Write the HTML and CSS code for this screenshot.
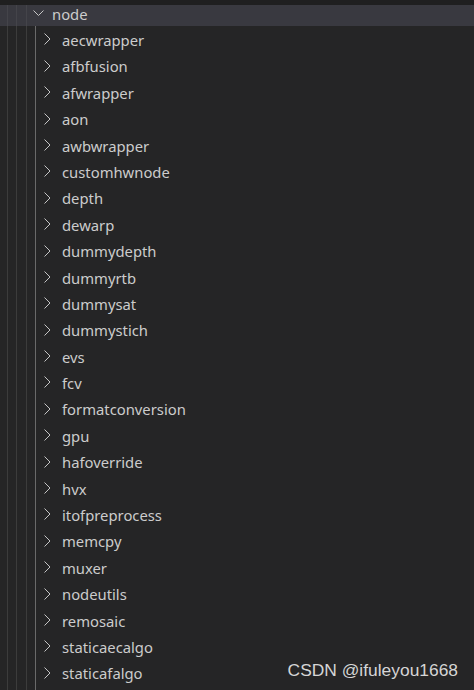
FILE: index.html
```html
<!DOCTYPE html>
<html>
<head>
<meta charset="utf-8">
<link rel="stylesheet" href="styles.css">
</head>
<body>
<div class="tree">
  <div class="shadow"></div>
  <div class="row row-open">
    <svg class="chev-down" width="11" height="7" viewBox="0 0 11 7"><polyline points="0.5,0.5 5.5,5.5 10.5,0.5" fill="none" stroke="#c5c5c5" stroke-width="1"/></svg>
    <span class="label">node</span>
  </div>
  <div class="children">
    <div class="row child"><svg class="chev" width="7" height="12" viewBox="0 0 7 12"><polyline points="0.5,0.5 6,6 0.5,11.5" fill="none" stroke="#c5c5c5" stroke-width="1"/></svg><span class="label">aecwrapper</span></div>
    <div class="row child"><svg class="chev" width="7" height="12" viewBox="0 0 7 12"><polyline points="0.5,0.5 6,6 0.5,11.5" fill="none" stroke="#c5c5c5" stroke-width="1"/></svg><span class="label">afbfusion</span></div>
    <div class="row child"><svg class="chev" width="7" height="12" viewBox="0 0 7 12"><polyline points="0.5,0.5 6,6 0.5,11.5" fill="none" stroke="#c5c5c5" stroke-width="1"/></svg><span class="label">afwrapper</span></div>
    <div class="row child"><svg class="chev" width="7" height="12" viewBox="0 0 7 12"><polyline points="0.5,0.5 6,6 0.5,11.5" fill="none" stroke="#c5c5c5" stroke-width="1"/></svg><span class="label">aon</span></div>
    <div class="row child"><svg class="chev" width="7" height="12" viewBox="0 0 7 12"><polyline points="0.5,0.5 6,6 0.5,11.5" fill="none" stroke="#c5c5c5" stroke-width="1"/></svg><span class="label">awbwrapper</span></div>
    <div class="row child"><svg class="chev" width="7" height="12" viewBox="0 0 7 12"><polyline points="0.5,0.5 6,6 0.5,11.5" fill="none" stroke="#c5c5c5" stroke-width="1"/></svg><span class="label">customhwnode</span></div>
    <div class="row child"><svg class="chev" width="7" height="12" viewBox="0 0 7 12"><polyline points="0.5,0.5 6,6 0.5,11.5" fill="none" stroke="#c5c5c5" stroke-width="1"/></svg><span class="label">depth</span></div>
    <div class="row child"><svg class="chev" width="7" height="12" viewBox="0 0 7 12"><polyline points="0.5,0.5 6,6 0.5,11.5" fill="none" stroke="#c5c5c5" stroke-width="1"/></svg><span class="label">dewarp</span></div>
    <div class="row child"><svg class="chev" width="7" height="12" viewBox="0 0 7 12"><polyline points="0.5,0.5 6,6 0.5,11.5" fill="none" stroke="#c5c5c5" stroke-width="1"/></svg><span class="label">dummydepth</span></div>
    <div class="row child"><svg class="chev" width="7" height="12" viewBox="0 0 7 12"><polyline points="0.5,0.5 6,6 0.5,11.5" fill="none" stroke="#c5c5c5" stroke-width="1"/></svg><span class="label">dummyrtb</span></div>
    <div class="row child"><svg class="chev" width="7" height="12" viewBox="0 0 7 12"><polyline points="0.5,0.5 6,6 0.5,11.5" fill="none" stroke="#c5c5c5" stroke-width="1"/></svg><span class="label">dummysat</span></div>
    <div class="row child"><svg class="chev" width="7" height="12" viewBox="0 0 7 12"><polyline points="0.5,0.5 6,6 0.5,11.5" fill="none" stroke="#c5c5c5" stroke-width="1"/></svg><span class="label">dummystich</span></div>
    <div class="row child"><svg class="chev" width="7" height="12" viewBox="0 0 7 12"><polyline points="0.5,0.5 6,6 0.5,11.5" fill="none" stroke="#c5c5c5" stroke-width="1"/></svg><span class="label">evs</span></div>
    <div class="row child"><svg class="chev" width="7" height="12" viewBox="0 0 7 12"><polyline points="0.5,0.5 6,6 0.5,11.5" fill="none" stroke="#c5c5c5" stroke-width="1"/></svg><span class="label">fcv</span></div>
    <div class="row child"><svg class="chev" width="7" height="12" viewBox="0 0 7 12"><polyline points="0.5,0.5 6,6 0.5,11.5" fill="none" stroke="#c5c5c5" stroke-width="1"/></svg><span class="label">formatconversion</span></div>
    <div class="row child"><svg class="chev" width="7" height="12" viewBox="0 0 7 12"><polyline points="0.5,0.5 6,6 0.5,11.5" fill="none" stroke="#c5c5c5" stroke-width="1"/></svg><span class="label">gpu</span></div>
    <div class="row child"><svg class="chev" width="7" height="12" viewBox="0 0 7 12"><polyline points="0.5,0.5 6,6 0.5,11.5" fill="none" stroke="#c5c5c5" stroke-width="1"/></svg><span class="label">hafoverride</span></div>
    <div class="row child"><svg class="chev" width="7" height="12" viewBox="0 0 7 12"><polyline points="0.5,0.5 6,6 0.5,11.5" fill="none" stroke="#c5c5c5" stroke-width="1"/></svg><span class="label">hvx</span></div>
    <div class="row child"><svg class="chev" width="7" height="12" viewBox="0 0 7 12"><polyline points="0.5,0.5 6,6 0.5,11.5" fill="none" stroke="#c5c5c5" stroke-width="1"/></svg><span class="label">itofpreprocess</span></div>
    <div class="row child"><svg class="chev" width="7" height="12" viewBox="0 0 7 12"><polyline points="0.5,0.5 6,6 0.5,11.5" fill="none" stroke="#c5c5c5" stroke-width="1"/></svg><span class="label">memcpy</span></div>
    <div class="row child"><svg class="chev" width="7" height="12" viewBox="0 0 7 12"><polyline points="0.5,0.5 6,6 0.5,11.5" fill="none" stroke="#c5c5c5" stroke-width="1"/></svg><span class="label">muxer</span></div>
    <div class="row child"><svg class="chev" width="7" height="12" viewBox="0 0 7 12"><polyline points="0.5,0.5 6,6 0.5,11.5" fill="none" stroke="#c5c5c5" stroke-width="1"/></svg><span class="label">nodeutils</span></div>
    <div class="row child"><svg class="chev" width="7" height="12" viewBox="0 0 7 12"><polyline points="0.5,0.5 6,6 0.5,11.5" fill="none" stroke="#c5c5c5" stroke-width="1"/></svg><span class="label">remosaic</span></div>
    <div class="row child"><svg class="chev" width="7" height="12" viewBox="0 0 7 12"><polyline points="0.5,0.5 6,6 0.5,11.5" fill="none" stroke="#c5c5c5" stroke-width="1"/></svg><span class="label">staticaecalgo</span></div>
    <div class="row child"><svg class="chev" width="7" height="12" viewBox="0 0 7 12"><polyline points="0.5,0.5 6,6 0.5,11.5" fill="none" stroke="#c5c5c5" stroke-width="1"/></svg><span class="label">staticafalgo</span></div>
    <div class="row child"></div>
  </div>
  <div class="watermark">CSDN @ifuleyou1668</div>
</div>
</body>
</html>
```

FILE: styles.css
```css
html, body {
  margin: 0;
  padding: 0;
  background: #252526;
  height: 690px;
  overflow: hidden;
}

.tree {
  position: relative;
  height: 690px;
  overflow: hidden;
  font-family: "Noto Sans", sans-serif;
  font-size: 14.8px;
  color: #cccccc;
  background-image:
    linear-gradient(#3c3c3c, #3c3c3c),
    linear-gradient(#3c3c3c, #3c3c3c),
    linear-gradient(#3c3c3c, #3c3c3c);
  background-size: 1px 100%, 1px 100%, 1px 100%;
  background-position: 7px 0, 16px 0, 26px 0;
  background-repeat: no-repeat;
}

.shadow {
  position: absolute;
  left: 0;
  top: 0;
  width: 100%;
  height: 5px;
  background: #1f1f20;
  z-index: 2;
}

.row {
  height: 26.4px;
  display: flex;
  align-items: center;
  box-sizing: border-box;
}

.row-open {
  margin-top: -0.2px;
  padding-left: 33px;
  background: rgba(75, 75, 85, 0.55);
}

.chev-down {
  margin-right: 8px;
  margin-top: 1px;
}

.children {
  margin-left: 35px;
  border-left: 1px solid #6a6a6a;
}

.child {
  padding-left: 8px;
}

.chev {
  margin-right: 11px;
}

.label {
  line-height: 1;
  white-space: nowrap;
  padding-top: 2px;
}

.watermark {
  position: absolute;
  right: 16px;
  top: 660px;
  font-family: "Liberation Sans", Arial, sans-serif;
  font-size: 17.4px;
  color: rgba(255, 255, 255, 0.82);
  z-index: 3;
}
```
